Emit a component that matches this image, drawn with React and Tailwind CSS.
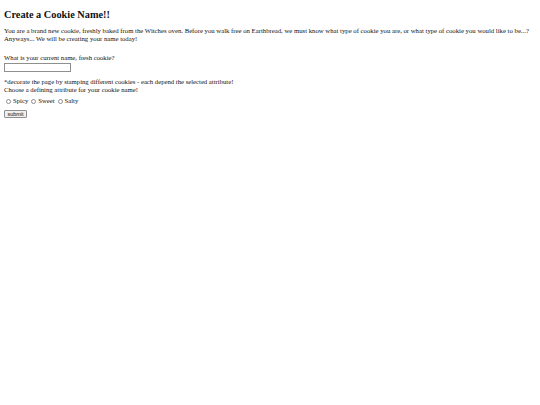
function Radio({ first }) {
  return (
    <span className={`${first ? "ml-[2px]" : "ml-[3px]"} mr-[2px] inline-block h-[5px] w-[5px] shrink-0 rounded-full border border-[#8f8f8f] bg-white`} />
  );
}

export default function App() {
  return (
    <div className="min-h-[405px] w-[540px] bg-white px-[4px] text-[#111]" style={{ fontFamily: '"Liberation Serif", "Times New Roman", serif' }}>
      <h1 className="pt-[9px] text-[10.3px] font-bold leading-[12px]">Create a Cookie Name!!</h1>
      <p className="mt-[6px] text-[6.72px] leading-[8px]">
        You are a brand new cookie, freshly baked from the Witches oven. Before you walk free on Earthbread, we must know what type of cookie you are, or what type of cookie you would like to be...? Anyways... We will be creating your name today!
      </p>
      <form className="mt-[11px] text-[6.7px] leading-[8px]" onSubmit={(e) => e.preventDefault()}>
        <label className="block">What is your current name, fresh cookie?</label>
        <input type="text" className="mt-[1px] block h-[9px] w-[67px] border border-[#8f8f8f] bg-white" />
        <div className="mt-[6px]">*decorate the page by stamping different cookies - each depend the selected attribute!</div>
        <div>Choose a defining attribute for your cookie name!</div>
        <div className="mt-[3px] flex h-[8px] items-center">
          <Radio first />
          <span>Spicy</span>
          <Radio />
          <span>Sweet</span>
          <Radio />
          <span>Salty</span>
        </div>
        <button type="submit" className="mt-[5px] block h-[8px] w-[23px] rounded-[1px] border border-[#8f8f8f] bg-[#efefef] text-[5.5px] leading-[6px]" style={{ fontFamily: '"Liberation Sans", Arial, sans-serif' }}>submit</button>
      </form>
    </div>
  );
}
